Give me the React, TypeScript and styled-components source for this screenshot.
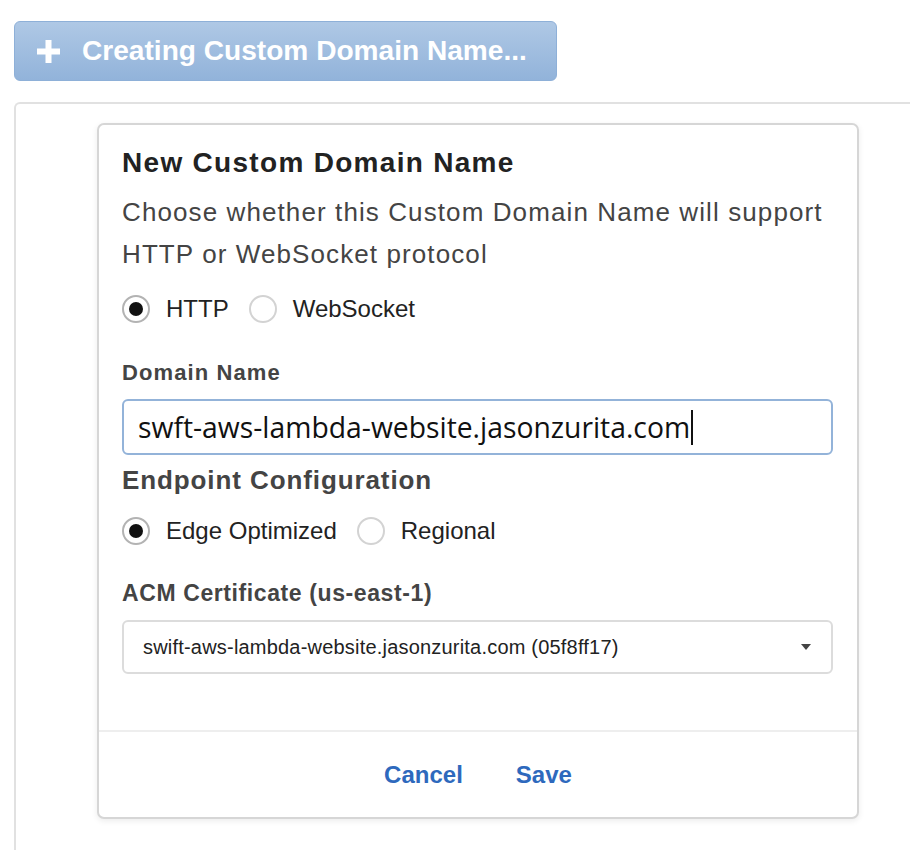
import React from 'react'
import styled, { createGlobalStyle } from 'styled-components'

const GlobalStyle = createGlobalStyle`
  html, body {
    margin: 0;
    padding: 0;
    background: #fff;
    overflow: hidden;
  }
  body {
    font-family: 'Liberation Sans', Arial, sans-serif;
  }
`

const Page = styled.div`
  width: 910px;
  height: 850px;
  padding: 21px 0 0 14px;
  box-sizing: border-box;
  overflow: hidden;
`

const CreateButton = styled.button`
  display: flex;
  align-items: center;
  gap: 22px;
  height: 60px;
  padding: 0 29px 0 22px;
  border: 1px solid #8eb0d8;
  border-radius: 6px;
  background: linear-gradient(#afc8e5, #92b3da);
  color: #fff;
  font-family: 'Liberation Sans', Arial, sans-serif;
  font-size: 28.1px;
  font-weight: bold;
`

const Panel = styled.div`
  margin-top: 21px;
  width: 920px;
  height: 800px;
  border: 2px solid #e1e1e1;
  border-right: none;
  border-bottom: none;
  border-top-left-radius: 6px;
  padding: 19px 0 0 81px;
  box-sizing: border-box;
`

const Dialog = styled.div`
  width: 762px;
  box-sizing: border-box;
  border: 2px solid #d6d6d6;
  border-radius: 7px;
  box-shadow: 0 2px 6px rgba(0, 0, 0, 0.08);
  background: #fff;
`

const Body = styled.div`
  padding: 22px 24px 56px 23px;
`

const Title = styled.h2`
  margin: 0;
  font-size: 28px;
  font-weight: bold;
  letter-spacing: 1.3px;
  color: #222;
  line-height: 32px;
`

const Description = styled.p`
  margin: 12px 0 0;
  font-size: 26px;
  letter-spacing: 1.1px;
  line-height: 42px;
  color: #444;
`

const RadioRow = styled.div<{ mt: number }>`
  display: flex;
  align-items: center;
  margin-top: ${({ mt }) => mt}px;
  height: 30px;
`

const RadioOption = styled.label`
  display: flex;
  align-items: center;
  gap: 16px;
  margin-right: 20px;
  font-size: 24px;
  color: #222;
`

const RadioCircle = styled.span<{ checked?: boolean }>`
  width: 28px;
  height: 28px;
  box-sizing: border-box;
  border-radius: 50%;
  border: 2px solid ${({ checked }) => (checked ? '#b3b3b3' : '#d3d3d3')};
  display: flex;
  align-items: center;
  justify-content: center;
  &::after {
    content: '';
    display: ${({ checked }) => (checked ? 'block' : 'none')};
    width: 14px;
    height: 14px;
    border-radius: 50%;
    background: #111;
  }
`

const FieldLabel = styled.div<{ size: number; mt: number; spacing: number; lh: number }>`
  margin-top: ${({ mt }) => mt}px;
  font-size: ${({ size }) => size}px;
  letter-spacing: ${({ spacing }) => spacing}px;
  line-height: ${({ lh }) => lh}px;
  font-weight: bold;
  color: #444;
`

const TextInput = styled.div`
  margin-top: 14px;
  height: 56px;
  box-sizing: border-box;
  border: 2px solid #93b3d9;
  border-radius: 6px;
  display: flex;
  align-items: center;
  padding-left: 14px;
  font-family: 'Open Sans', 'DejaVu Sans', sans-serif;
  font-size: 28.3px;
  color: #111;
`

const Cursor = styled.span`
  display: inline-block;
  width: 2px;
  height: 35px;
  background: #111;
  margin-left: 1px;
`

const Select = styled.div`
  margin-top: 14px;
  height: 54px;
  box-sizing: border-box;
  border: 2px solid #dcdcdc;
  border-radius: 6px;
  display: flex;
  align-items: center;
  justify-content: space-between;
  padding: 0 20px 0 19px;
  font-size: 20px;
  letter-spacing: 0.2px;
  color: #222;
`

const Caret = styled.span`
  width: 0;
  height: 0;
  border-left: 5px solid transparent;
  border-right: 5px solid transparent;
  border-top: 6px solid #444;
`

const Footer = styled.div`
  border-top: 2px solid #eeeeee;
  height: 85px;
  display: flex;
  align-items: center;
  justify-content: center;
  gap: 53px;
`

const LinkButton = styled.button`
  border: none;
  background: none;
  padding: 0;
  color: #2e69bd;
  font-family: 'Liberation Sans', Arial, sans-serif;
  font-size: 24px;
  font-weight: bold;
`

const PlusIcon = () => (
  <svg width="23" height="23" viewBox="0 0 23 23">
    <path d="M8.5 0h6v8.5H23v6h-8.5V23h-6v-8.5H0v-6h8.5z" fill="#fff" />
  </svg>
)

export default function App() {
  return (
    <Page>
      <GlobalStyle />
      <CreateButton>
        <PlusIcon />
        Creating Custom Domain Name...
      </CreateButton>
      <Panel>
        <Dialog>
          <Body>
            <Title>New Custom Domain Name</Title>
            <Description>
              Choose whether this Custom Domain Name will support
              <br />
              HTTP or WebSocket protocol
            </Description>
            <RadioRow mt={19}>
              <RadioOption>
                <RadioCircle checked />
                HTTP
              </RadioOption>
              <RadioOption>
                <RadioCircle />
                WebSocket
              </RadioOption>
            </RadioRow>
            <FieldLabel size={22} spacing={1.1} lh={25} mt={36}>
              Domain Name
            </FieldLabel>
            <TextInput>
              swft-aws-lambda-website.jasonzurita.com
              <Cursor />
            </TextInput>
            <FieldLabel size={26} spacing={0.9} lh={31} mt={10}>
              Endpoint Configuration
            </FieldLabel>
            <RadioRow mt={20}>
              <RadioOption>
                <RadioCircle checked />
                Edge Optimized
              </RadioOption>
              <RadioOption>
                <RadioCircle />
                Regional
              </RadioOption>
            </RadioRow>
            <FieldLabel size={23} spacing={0.6} lh={25} mt={35}>
              ACM Certificate (us-east-1)
            </FieldLabel>
            <Select>
              swift-aws-lambda-website.jasonzurita.com (05f8ff17)
              <Caret />
            </Select>
          </Body>
          <Footer>
            <LinkButton>Cancel</LinkButton>
            <LinkButton>Save</LinkButton>
          </Footer>
        </Dialog>
      </Panel>
    </Page>
  )
}
